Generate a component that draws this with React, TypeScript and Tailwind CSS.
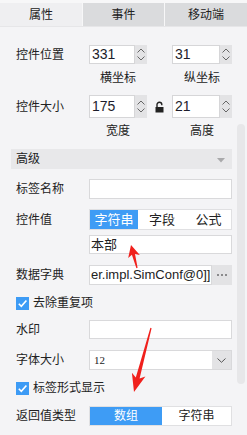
import React from "react";

type Pt = [number, number];

// red annotation arrow: polygon from tip to tail with a notched head
function arrowPoints(tip: Pt, tail: Pt, headLen: number, headW: number, shaftW: number) {
  const dx = tail[0] - tip[0];
  const dy = tail[1] - tip[1];
  const len = Math.hypot(dx, dy);
  const ux = dx / len;
  const uy = dy / len;
  const nx = -uy;
  const ny = ux;
  const at = (d: number, w: number): string =>
    `${(tip[0] + ux * d + nx * w).toFixed(1)},${(tip[1] + uy * d + ny * w).toFixed(1)}`;
  return [
    at(0, 0),
    at(headLen, headW),
    at(headLen * 0.8, shaftW),
    at(len, 0.6),
    at(len, -0.6),
    at(headLen * 0.8, -shaftW),
    at(headLen, -headW),
  ].join(" ");
}

function Spinner() {
  return (
    <div className="flex h-full w-[12px] flex-col items-center justify-center gap-[3px] bg-[#e3e3e5]">
      <svg width="8" height="5" viewBox="0 0 8 5">
        <path d="M0.5 4.5 L4 1 L7.5 4.5" fill="none" stroke="#666" strokeWidth="1" />
      </svg>
      <svg width="8" height="5" viewBox="0 0 8 5">
        <path d="M0.5 0.5 L4 4 L7.5 0.5" fill="none" stroke="#666" strokeWidth="1" />
      </svg>
    </div>
  );
}

function NumberBox({ value, w }: { value: string; w: string }) {
  return (
    <div className="flex h-full">
      <div
        className={`${w} flex h-full items-center border border-[#d6d6d8] bg-white pl-[2px] text-[14px] text-[#1d1d2b]`}
      >
        {value}
      </div>
      <Spinner />
    </div>
  );
}

function Check() {
  return (
    <div className="flex h-[13px] w-[13px] items-center justify-center bg-[#3d9bf5]">
      <svg width="11" height="11" viewBox="0 0 11 11">
        <path d="M1.8 5.8 L4.3 8.3 L9.4 2.4" fill="none" stroke="#fff" strokeWidth="1.6" />
      </svg>
    </div>
  );
}

const label = "w-[73px] shrink-0 text-[12px] leading-[14px] text-[#222]";

export default function App() {
  return (
    <div
      className="relative h-[435px] w-[247px] overflow-hidden bg-[#f4f4f6] text-[#222]"
      style={{ fontFamily: '"Liberation Sans", "Noto Sans CJK SC", sans-serif' }}
    >
      {/* Tabs */}
      <div className="flex gap-[1px] border-b border-[#e6e6e8] bg-[#f7f7f8] pt-[3px]">
        <div className="flex h-[23px] w-[82px] items-center justify-center bg-[#efeff1] text-[12px]">属性</div>
        <div className="flex h-[23px] w-[81px] items-center justify-center bg-[#dadbdd] text-[12px]">事件</div>
        <div className="flex h-[23px] flex-1 items-center justify-center bg-[#dadbdd] text-[12px]">移动端</div>
      </div>

      <div className="flex">
        {/* Content */}
        <div className="w-[236px] pl-4 pr-[4px]">
          {/* 控件位置 */}
          <div className="mt-[18px] flex h-[19px] items-center">
            <div className={label}>控件位置</div>
            <NumberBox value="331" w="w-[46px]" />
            <div className="w-[25px]" />
            <NumberBox value="31" w="w-[48px]" />
          </div>
          <div className="mt-[7px] flex h-[14px] text-[12px] leading-[14px]">
            <div className="w-[73px]" />
            <div className="w-[58px] text-center">横坐标</div>
            <div className="w-[25px]" />
            <div className="w-[60px] text-center">纵坐标</div>
          </div>

          {/* 控件大小 */}
          <div className="mt-[10px] flex h-[23px] items-center">
            <div className={label}>控件大小</div>
            <NumberBox value="175" w="w-[46px]" />
            <div className="flex w-[25px] items-center justify-center">
              <svg width="9" height="12" viewBox="0 0 9 12">
                <path d="M2 6 V3.6 A2.4 2.4 0 0 1 6.8 3.6 V4.2" fill="none" stroke="#222" strokeWidth="1.4" />
                <rect x="0.5" y="6" width="8" height="5.5" fill="#222" />
              </svg>
            </div>
            <NumberBox value="21" w="w-[48px]" />
          </div>
          <div className="mt-[6px] flex h-[14px] text-[12px] leading-[14px]">
            <div className="w-[73px]" />
            <div className="w-[58px] text-center">宽度</div>
            <div className="w-[25px]" />
            <div className="w-[60px] text-center">高度</div>
          </div>

          {/* 高级 */}
          <div className="-ml-[5px] mt-[11px] flex h-[20px] items-center justify-between bg-[#e8e8ea] px-[5px]">
            <span className="text-[12px]">高级</span>
            <svg width="8" height="5" viewBox="0 0 8 5" className="mr-[2px] mt-[3px]">
              <path d="M0 0 H8 L4 4.5 Z" fill="#a9a9ab" />
            </svg>
          </div>

          {/* 标签名称 */}
          <div className="mt-[10px] flex h-[20px] items-center">
            <div className={label}>标签名称</div>
            <div className="h-full flex-1 border border-[#d9d9db] bg-white" />
          </div>

          {/* 控件值 */}
          <div className="mt-[10px] flex h-[21px] items-center">
            <div className={label}>控件值</div>
            <div className="flex h-full flex-1 border border-[#e0e0e2] bg-white text-[13px]">
              <div className="flex w-[48px] items-center justify-center bg-[#3e9cf5] text-white">字符串</div>
              <div className="flex w-[48px] items-center justify-center">字段</div>
              <div className="flex flex-1 items-center justify-center">公式</div>
            </div>
          </div>
          <div className="mt-[5px] flex h-[19px] items-center">
            <div className="w-[73px] shrink-0" />
            <div className="flex h-full flex-1 items-center border border-[#d9d9db] bg-white pl-[1px] text-[13px]">
              本部
            </div>
          </div>

          {/* 数据字典 */}
          <div className="mt-[11px] flex h-[20px] items-center">
            <div className={label}>数据字典</div>
            <div className="flex h-full w-[123px] items-center overflow-hidden whitespace-nowrap border border-[#d9d9db] bg-white pl-[1px] text-[13px]">
              er.impl.SimConf@0]]
            </div>
            <div className="flex h-full flex-1 items-center justify-center gap-[2px] bg-[#e3e3e5]">
              <span className="h-[2px] w-[2px] bg-[#8a8a8c]" />
              <span className="h-[2px] w-[2px] bg-[#8a8a8c]" />
              <span className="h-[2px] w-[2px] bg-[#8a8a8c]" />
            </div>
          </div>

          {/* 去除重复项 */}
          <div className="mt-[11px] flex h-[14px] items-center gap-[4px]">
            <Check />
            <span className="text-[12px] leading-[14px]">去除重复项</span>
          </div>

          {/* 水印 */}
          <div className="mt-[10px] flex h-[19px] items-center">
            <div className={label}>水印</div>
            <div className="h-full flex-1 border border-[#d9d9db] bg-white" />
          </div>

          {/* 字体大小 */}
          <div className="mt-[11px] flex h-[20px] items-center">
            <div className={label}>字体大小</div>
            <div className="flex h-full flex-1 border border-[#d9d9db] bg-white">
              <div
                className="flex flex-1 items-center pl-[4px] text-[11px]"
                style={{ fontFamily: '"Liberation Serif", serif' }}
              >
                12
              </div>
              <div className="flex w-[19px] items-center justify-center bg-[#e3e3e5]">
                <svg width="9" height="5" viewBox="0 0 9 5">
                  <path d="M0.5 0.5 L4.5 4.3 L8.5 0.5" fill="none" stroke="#555" strokeWidth="1" />
                </svg>
              </div>
            </div>
          </div>

          {/* 标签形式显示 */}
          <div className="mt-[11px] flex h-[14px] items-center gap-[4px]">
            <Check />
            <span className="text-[12px] leading-[14px]">标签形式显示</span>
          </div>

          {/* 返回值类型 */}
          <div className="mt-[11px] flex h-[20px] items-center">
            <div className={label}>返回值类型</div>
            <div className="flex h-full flex-1 border border-[#e0e0e2] bg-white text-[12px]">
              <div className="flex w-[72px] items-center justify-center bg-[#3e9cf5] text-white">数组</div>
              <div className="flex flex-1 items-center justify-center">字符串</div>
            </div>
          </div>
        </div>

        {/* Scrollbar */}
        <div className="w-[11px] pl-[1px]">
          <div className="mt-[97px] h-[260px] w-[8px] rounded-[4px] bg-[#e7e7e9]" />
        </div>
      </div>

      {/* Annotation arrows */}
      <svg className="pointer-events-none absolute left-0 top-0" width="247" height="435">
        <polygon points={arrowPoints([131, 245], [137, 268], 12, 6, 1.6)} fill="#f0201c" />
        <polygon points={arrowPoints([134, 392], [151, 328], 18, 7, 2)} fill="#f0201c" />
      </svg>
    </div>
  );
}
